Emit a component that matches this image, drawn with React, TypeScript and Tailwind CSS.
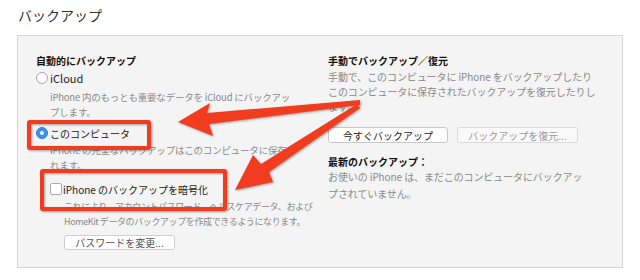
import React from "react";

const font = { fontFamily: '"Noto Sans CJK JP", "Noto Sans", sans-serif' };

function Radio({ checked }: { checked?: boolean }) {
  if (checked) {
    return (
      <span className="flex h-[12px] w-[12px] shrink-0 items-center justify-center rounded-full border border-[#2f7fd9] bg-[#3d8ff0]">
        <span className="h-[4px] w-[4px] rounded-full bg-white" />
      </span>
    );
  }
  return <span className="h-[12px] w-[12px] shrink-0 rounded-full border border-[#a8a8a8] bg-white" />;
}

export default function App() {
  return (
    <div className="relative h-[280px] w-[640px] overflow-hidden bg-white text-[10px]" style={font}>
      <div className="h-[35px] pl-[18px] pt-[5px] text-[14px] leading-[20px] text-[#333]">バックアップ</div>

      <div className="ml-[17px] box-border flex h-[233px] w-[606px] border border-[#d6d6d6] bg-[#f4f4f4] pl-[18px] pt-[17px]">
        {/* left: automatic backup */}
        <div className="w-[292px]">
          <div className="font-bold leading-[16px] text-[#111]">自動的にバックアップ</div>
          <div className="mt-[1px] flex h-[16px] items-center gap-[2px] text-[11px] text-[#222]">
            <Radio />
            <span>iCloud</span>
          </div>
          <div className="mt-[4px] whitespace-nowrap pl-[14px] text-[9.5px] leading-[15px] tracking-[-0.2px] text-[#8a8a8a]">
            iPhone 内のもっとも重要なデータを iCloud にバックアッ
            <br />
            プします。
          </div>
          <div className="mt-[5px] flex h-[16px] items-center gap-[2px] text-[#222]">
            <Radio checked />
            <span>このコンピュータ</span>
          </div>
          <div className="mt-[2px] whitespace-nowrap pl-[14px] text-[9.5px] leading-[15px] tracking-[-0.2px] text-[#8a8a8a]">
            iPhone の完全なバックアップはこのコンピュータに保存さ
            <br />
            れます。
          </div>
          <div className="ml-[14px] mt-[8px] flex h-[16px] items-center gap-[1px] text-[#222]">
            <span className="h-[12px] w-[12px] shrink-0 rounded-[2px] border border-[#a8a8a8] bg-white" />
            <span>iPhone のバックアップを暗号化</span>
          </div>
          <div className="mt-[2px] whitespace-nowrap pl-[28px] text-[9px] leading-[15px] tracking-[-0.4px] text-[#8a8a8a]">
            これにより、アカウントパスワード、ヘルスケアデータ、および
            <br />
            HomeKit データのバックアップを作成できるようになります。
          </div>
          <button className="ml-[28px] mt-[6px] flex h-[15px] w-[111px] items-center justify-center rounded-[3px] border border-[#cfcfcf] bg-white text-[10px] text-[#555]">
            パスワードを変更...
          </button>
        </div>

        {/* right: manual backup */}
        <div className="flex-1">
          <div className="font-bold leading-[16px] text-[#111]">手動でバックアップ／復元</div>
          <div className="whitespace-nowrap leading-[15px] tracking-[-0.1px] text-[#8a8a8a]">
            手動で、このコンピュータに iPhone をバックアップしたり
            <br />
            このコンピュータに保存されたバックアップを復元したりし
            <br />
            ます。
          </div>
          <div className="mt-[13px] flex gap-[9px]">
            <button className="flex h-[16px] w-[120px] items-center justify-center rounded-[3px] border border-[#c8c8c8] bg-white text-[#222]">
              今すぐバックアップ
            </button>
            <button className="flex h-[16px] w-[121px] items-center justify-center rounded-[3px] border border-[#dadada] bg-[#f9f9f9] text-[#9a9a9a]">
              バックアップを復元...
            </button>
          </div>
          <div className="mt-[12px] font-bold leading-[13px] text-[#111]">最新のバックアップ：</div>
          <div className="whitespace-nowrap leading-[17px] tracking-[-0.1px] text-[#8a8a8a]">
            お使いの iPhone は、まだこのコンピュータにバックアッ
            <br />
            プされていません。
          </div>
        </div>
      </div>

      {/* annotation overlay */}
      <svg className="pointer-events-none absolute left-0 top-0" width="640" height="280" viewBox="0 0 640 280">
        <g style={{ filter: "drop-shadow(1px 1px 1px rgba(0,0,0,0.35))" }}>
          <rect x="29" y="122" width="120" height="26" fill="none" stroke="#f23c1f" strokeWidth="4" rx="1" />
          <rect x="42" y="171" width="183" height="38" fill="none" stroke="#f23c1f" strokeWidth="4" rx="1" />
          <polygon points="360,100 360,105 209,124 213,136 178,122 210,103 207,113" fill="#f23c1f" />
          <polygon points="357,104 360,108 269,172 273,182 235,190 253,155 261,164" fill="#f23c1f" />
        </g>
      </svg>
    </div>
  );
}
